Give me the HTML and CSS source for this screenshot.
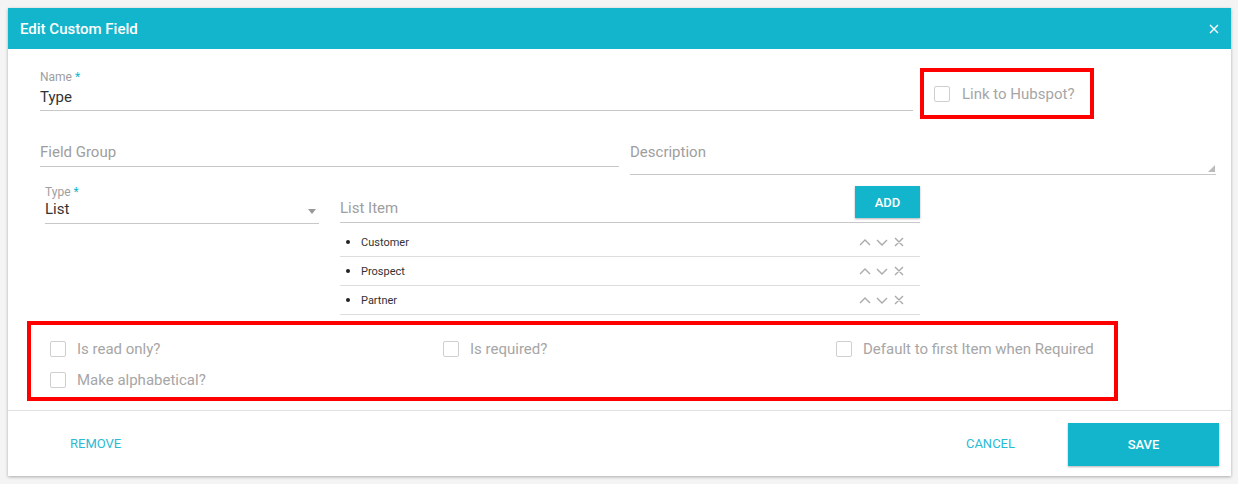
FILE: index.html
```html
<!DOCTYPE html>
<html>
<head>
<meta charset="utf-8">
<link rel="stylesheet" href="styles.css">
</head>
<body>
<div class="dialog">
  <div class="header">
    <span class="title">Edit Custom Field</span>
    <svg class="close" width="10" height="10" viewBox="0 0 10 10"><path d="M1 1L9 9M9 1L1 9" stroke="#fff" stroke-width="1.4"/></svg>
  </div>
  <div class="body">
    <div class="row row1">
      <div class="field name">
        <div class="label">Name <span class="req">*</span></div>
        <div class="value">Type</div>
      </div>
      <div class="hl hubspot">
        <label class="check"><span class="box"></span><span class="ctext">Link to Hubspot?</span></label>
      </div>
    </div>
    <div class="row row2">
      <div class="field group"><div class="placeholder">Field Group</div></div>
      <div class="field desc"><div class="placeholder">Description</div>
        <svg class="grip" width="7" height="7" viewBox="0 0 7 7"><path d="M7 0L7 7L0 7Z" fill="#bbb"/></svg>
      </div>
    </div>
    <div class="row row3">
      <div class="field type">
        <div class="label">Type <span class="req">*</span></div>
        <div class="value">List</div>
        <svg class="caret" width="8" height="5" viewBox="0 0 8 5"><path d="M0 0H8L4 5Z" fill="#999"/></svg>
      </div>
      <div class="listcol">
        <div class="listhead">
          <div class="placeholder">List Item</div>
          <button class="add">ADD</button>
        </div>
        <ul class="items">
          <li><span class="bullet"></span><span class="itext">Customer</span><span class="acts"><svg width="52" height="12" viewBox="0 0 52 12"><path d="M1 9L6 4L11 9M18 4L23 9L28 4M36 2L44 10M44 2L36 10" stroke="#aaa" stroke-width="1.4" fill="none"/></svg></span></li>
          <li><span class="bullet"></span><span class="itext">Prospect</span><span class="acts"><svg width="52" height="12" viewBox="0 0 52 12"><path d="M1 9L6 4L11 9M18 4L23 9L28 4M36 2L44 10M44 2L36 10" stroke="#aaa" stroke-width="1.4" fill="none"/></svg></span></li>
          <li><span class="bullet"></span><span class="itext">Partner</span><span class="acts"><svg width="52" height="12" viewBox="0 0 52 12"><path d="M1 9L6 4L11 9M18 4L23 9L28 4M36 2L44 10M44 2L36 10" stroke="#aaa" stroke-width="1.4" fill="none"/></svg></span></li>
        </ul>
      </div>
    </div>
    <div class="hl opts">
      <label class="check"><span class="box"></span><span class="ctext">Is read only?</span></label>
      <label class="check"><span class="box"></span><span class="ctext">Is required?</span></label>
      <label class="check"><span class="box"></span><span class="ctext">Default to first Item when Required</span></label>
      <label class="check"><span class="box"></span><span class="ctext">Make alphabetical?</span></label>
    </div>
  </div>
  <div class="footer">
    <button class="link remove">REMOVE</button>
    <div class="spacer"></div>
    <button class="link cancel">CANCEL</button>
    <button class="save">SAVE</button>
  </div>
</div>
</body>
</html>
```
FILE: styles.css
```css
html, body { margin: 0; padding: 0; }
body {
  background: #f4f4f4;
  font-family: Roboto, "Liberation Sans", Arial, sans-serif;
  padding: 8px 7px 8px 8px;
}
.dialog {
  background: #fff;
  box-shadow: 0 1px 3px rgba(0,0,0,0.3);
  height: 468px;
  display: flex;
  flex-direction: column;
}
.header {
  background: #13b5cc;
  height: 41px;
  display: flex;
  align-items: center;
  padding: 0 12px 0 12px;
}
.title { color: #fff; font-size: 15px; font-weight: 500; flex: 1; }
.close { display: block; margin-top: 1px; }
.body { padding: 0 15px 0 32px; flex: 1; }
.row { display: flex; }
.field { border-bottom: 1px solid #c8c8c8; position: relative; }
.label { font-size: 12px; line-height: 14px; color: #9e9e9e; }
.req { color: #13b5cc; }
.value { font-size: 15px; line-height: 20px; color: #333; }
.placeholder { font-size: 15px; line-height: 20px; color: #9e9e9e; }

.row1 { padding-top: 19px; }
.name { width: 873px; padding-top: 2px; padding-bottom: 3px; align-self: flex-start; margin-right: 7px; }
.name .label { margin-bottom: 3px; }
.hl { border: 4px solid #ff0000; box-sizing: border-box; }
.hubspot { width: 174px; height: 51px; display: flex; align-items: center; padding-left: 10px; }

.check { display: flex; align-items: center; }
.box { width: 14px; height: 14px; border: 1px solid #cfcfcf; border-radius: 2px; margin-right: 12px; box-sizing: content-box; }
.ctext { font-size: 15px; color: #a6a6a6; line-height: 20px; }

.row2 { margin-top: 23px; align-items: flex-start; }
.group { width: 579px; padding-bottom: 4px; margin-right: 11px; }
.desc { flex: 1; padding-bottom: 12px; }
.grip { position: absolute; right: 1px; bottom: 2px; }

.row3 { margin-top: 9px; align-items: flex-start; }
.type { width: 274px; margin-left: 5px; margin-right: 21px; padding-bottom: 4px; }
.type .label { margin-top: 1px; }
.type .value { line-height: 20px; }
.caret { position: absolute; right: 3px; bottom: 9px; }
.listcol { width: 580px; margin-top: 1px; }
.listhead { display: flex; align-items: flex-end; border-bottom: 1px solid #c8c8c8; height: 38px; box-sizing: border-box; }
.listhead .placeholder { flex: 1; padding-bottom: 4px; }
.add {
  background: #13b5cc; color: #fff; border: 0; font-family: inherit;
  font-size: 13px; font-weight: 500; width: 65px; height: 32px;
  align-self: flex-start; margin-top: 1px;
  box-shadow: 0 1px 2px rgba(0,0,0,0.3);
}
.items { list-style: none; margin: 5px 0 0 0; padding: 0; }
.items li { height: 28px; border-bottom: 1px solid #ddd; display: flex; align-items: center; }
.bullet { width: 4px; height: 4px; background: #222; border-radius: 50%; margin-left: 6px; margin-right: 11px; }
.itext { font-size: 11px; color: #333; flex: 1; }
.acts { display: flex; margin-right: 9px; }
.acts svg { display: block; }

.opts {
  margin-top: 6px;
  margin-left: -13px;
  width: 1091px;
  height: 80px;
  display: grid;
  grid-template-columns: 393px 393px 1fr;
  grid-auto-rows: 31px;
  padding: 8px 0 0 19px;
  align-content: start;
}
.opts .box { margin-right: 11px; }

.footer {
  border-top: 1px solid #e0e0e0;
  height: 66px;
  box-sizing: border-box;
  display: flex;
  align-items: center;
  padding: 0 12px 0 32px;
}
.spacer { flex: 1; }
button { font-family: inherit; cursor: pointer; }
.link {
  background: none; border: 0; color: #2bbad3; font-size: 13px; padding: 0 30px;
  height: 36px;
}
.cancel { margin-right: 23px; }
.save {
  background: #13b5cc; color: #fff; border: 0; font-size: 13px; font-weight: 500;
  width: 151px; height: 43px; box-shadow: 0 1px 2px rgba(0,0,0,0.3);
  margin-top: 1px;
}
```
